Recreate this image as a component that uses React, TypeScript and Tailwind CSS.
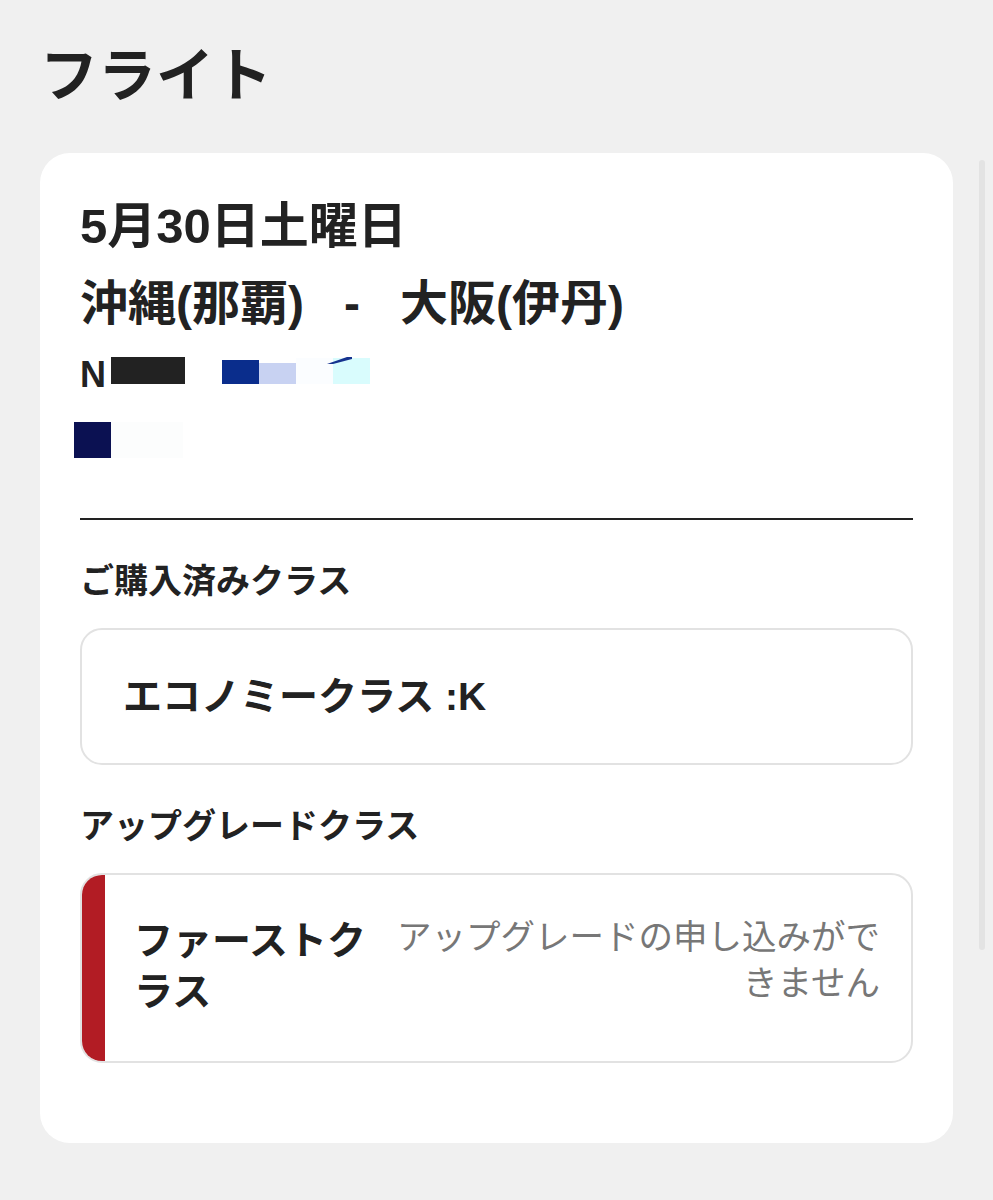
import React from "react";

export default function App() {
  return (
    <div className="relative min-h-[1200px] bg-[#f0f0f0] px-[40px] pt-[47px] font-['Liberation_Sans','Noto_Sans_CJK_JP',sans-serif] text-[#222222]">
      <h1 className="text-[58px] leading-[58px] font-bold">フライト</h1>

      <div className="mt-[48px] bg-white rounded-[30px] px-[40px] pt-[34px] pb-[80px]">
        <div className="text-[48px] leading-[78px] font-bold">
          <div className="text-[49px]">5月30日土曜日</div>
          <div className="whitespace-pre">沖縄(那覇)   -   大阪(伊丹)</div>
        </div>

        {/* redacted row 1 */}
        <div className="mt-[14px] flex items-start h-[36px]">
          <span className="text-[36px] leading-[40px] font-bold mt-[-2px]">N</span>
          <div className="ml-[5px] w-[74px] h-[27px] bg-[#222222]" />
          <div className="ml-[37px] w-[37px] h-[24px] mt-[3px] bg-[#0a2d8c]" />
          <div className="w-[37px] h-[21px] mt-[6px] bg-[#c8d2f2]" />
          <div className="w-[37px] h-[26px] mt-[1px] bg-[#fbfdff]" />
          <div className="relative w-[37px] h-[26px] mt-[1px] bg-[#d9fcfd]">
            <svg className="absolute left-[-6px] top-[-1px]" width="25" height="7" viewBox="0 0 25 7">
              <polygon points="0,7 20,0 25,0 25,2 6,7" fill="#16338f" />
            </svg>
          </div>
        </div>

        {/* redacted row 2 */}
        <div className="mt-[29px] flex h-[36px] ml-[-6px]">
          <div className="w-[37px] h-[36px] bg-[#0b1152]" />
          <div className="w-[72px] h-[36px] bg-[#fcfdfd]" />
        </div>

        <div className="mt-[60px] h-[2px] bg-[#222222]" />

        <div className="mt-[44px] text-[34px] leading-[34px] font-bold">ご購入済みクラス</div>

        <div className="mt-[30px] h-[137px] rounded-[22px] border-2 border-[#e2e2e2] flex items-center pl-[41px]">
          <span className="text-[39px] leading-[44px] font-bold">エコノミークラス :K</span>
        </div>

        <div className="mt-[44px] text-[34px] leading-[34px] font-bold">アップグレードクラス</div>

        <div className="mt-[30px] h-[190px] rounded-[22px] border-2 border-[#e2e2e2] overflow-hidden flex">
          <div className="w-[25px] bg-[#b21c24] ml-[-2px] my-[-2px]" />
          <div className="flex-1 flex items-start pl-[29px] pr-[31px]">
            <div className="w-[245px] pt-[40px] text-[39px] leading-[51px] font-bold">ファーストクラス</div>
            <div className="flex-1 ml-[15px] pt-[39px] text-right text-[34.5px] leading-[46px] text-[#777777]">
              アップグレードの申し込みができません
            </div>
          </div>
        </div>
      </div>

      <div className="absolute left-[979px] top-[160px] w-[6px] h-[790px] rounded-full bg-[#e3e3e3]" />
    </div>
  );
}
